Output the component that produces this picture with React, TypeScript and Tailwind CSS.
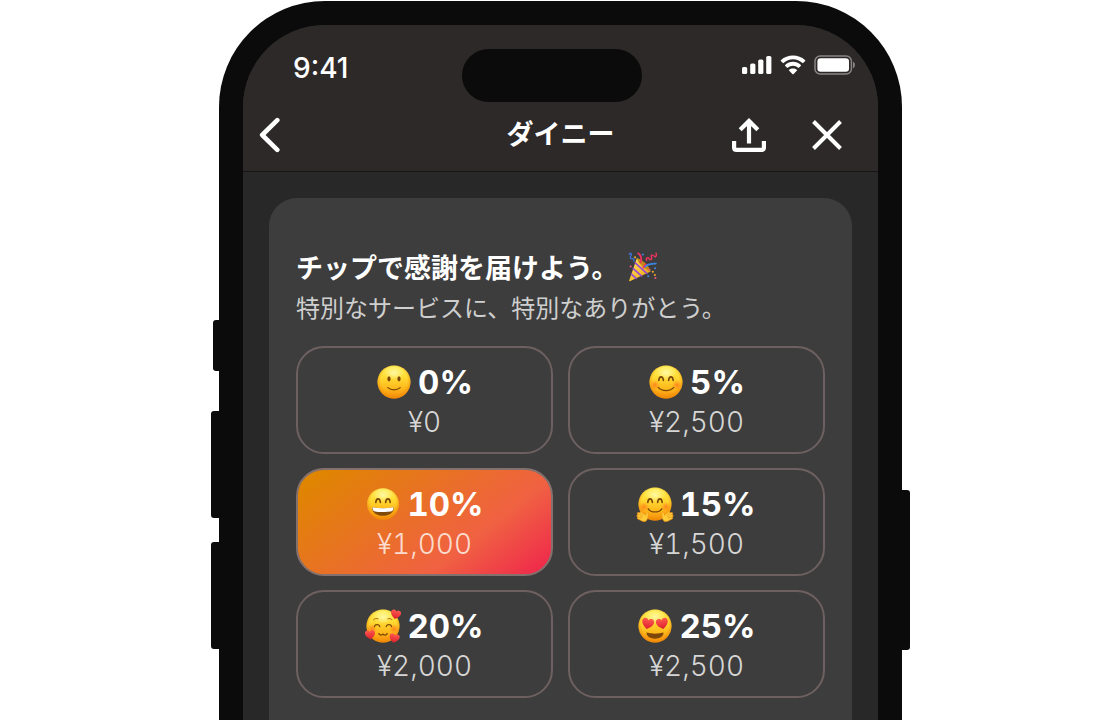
import { useState, type ReactNode } from "react";

const heart =
  "M0 5.6C-3.6 3.2-6 .9-6-1.8-6-3.9-4.5-5.2-2.9-5.2-1.6-5.2-.5-4.5 0-3.2.5-4.5 1.6-5.2 2.9-5.2 4.5-5.2 6-3.9 6-1.8 6 .9 3.6 3.2 0 5.6Z";

function Gradients() {
  return (
    <svg className="absolute h-0 w-0" aria-hidden="true">
      <defs>
        <linearGradient id="face" x1="0" y1="0" x2="0" y2="1">
          <stop offset="0" stopColor="#fff05a" />
          <stop offset=".35" stopColor="#ffdc34" />
          <stop offset=".7" stopColor="#ffb81c" />
          <stop offset="1" stopColor="#f58a0a" />
        </linearGradient>
        <radialGradient id="rim" cx=".5" cy=".45" r=".55">
          <stop offset=".72" stopColor="#f59a10" stopOpacity="0" />
          <stop offset="1" stopColor="#ec8606" stopOpacity=".8" />
        </radialGradient>
        <radialGradient id="shine" cx=".5" cy=".5" r=".5">
          <stop offset="0" stopColor="#fffbb0" stopOpacity=".9" />
          <stop offset="1" stopColor="#fffbb0" stopOpacity="0" />
        </radialGradient>
        <radialGradient id="blush" cx=".5" cy=".5" r=".5">
          <stop offset="0" stopColor="#ff6a1a" stopOpacity=".7" />
          <stop offset="1" stopColor="#ff7a1a" stopOpacity="0" />
        </radialGradient>
        <linearGradient id="heart" x1="0" y1="0" x2="0" y2="1">
          <stop offset="0" stopColor="#ff5a4e" />
          <stop offset="1" stopColor="#dc1d2e" />
        </linearGradient>
        <linearGradient id="cone" x1="0" y1="0" x2="1" y2="1">
          <stop offset="0" stopColor="#ffe46a" />
          <stop offset=".6" stopColor="#f7bd2c" />
          <stop offset="1" stopColor="#c98712" />
        </linearGradient>
      </defs>
    </svg>
  );
}

function Face({ radius = 16.5, children }: { radius?: number; children: ReactNode }) {
  return (
    <svg
      viewBox="-18 -18 36 36"
      className="h-9 w-9 shrink-0 overflow-visible"
      fill="none"
      strokeLinecap="round"
      strokeLinejoin="round"
      aria-hidden="true"
    >
      <circle r={radius} fill="url(#face)" />
      <circle r={radius} fill="url(#rim)" />
      <ellipse cy="-9" rx="10" ry="7" fill="url(#shine)" />
      {children}
    </svg>
  );
}

function Blush() {
  return (
    <>
      <circle cx="-11" cy="3" r="5" fill="url(#blush)" />
      <circle cx="11" cy="3" r="5" fill="url(#blush)" />
    </>
  );
}

function ArchedEyes() {
  return (
    <path
      d="M-7.2-1.5C-6.8-6.3-3.1-6.3-2.6-1.5M2.6-1.5C3.1-6.3 6.8-6.3 7.2-1.5"
      stroke="#7a4708"
      strokeWidth="1.6"
    />
  );
}

function SlightSmile() {
  return (
    <Face>
      <ellipse cx="-5" cy="-3.2" rx="1.6" ry="2.6" fill="#7a4708" />
      <ellipse cx="5" cy="-3.2" rx="1.6" ry="2.6" fill="#7a4708" />
      <path d="M-6.2 5.6C-3 8.6 3 8.6 6.2 5.6" stroke="#7a4708" strokeWidth="1.2" />
    </Face>
  );
}

function BlushingSmile() {
  return (
    <Face>
      <Blush />
      <ArchedEyes />
      <path d="M-7.8 5.4C-4 9.6 4 9.6 7.8 5.4" stroke="#7a4708" strokeWidth="1.3" />
    </Face>
  );
}

function Grin() {
  return (
    <Face radius={15.8}>
      <ArchedEyes />
      <path d="M-11 3.2C-4 4.6 4 4.6 11 3.2 11 8.4 6.5 11.8 0 11.8S-11 8.4-11 3.2Z" fill="#804a0b" />
      <path d="M-10.6 3.3C-4 4.7 4 4.7 10.6 3.3 10.5 6.2 9.5 7.2 8 7.4-3 8.2-3 8.2-8 7.4-9.5 7.2-10.5 6.2-10.6 3.3Z" fill="#fff" />
    </Face>
  );
}

function Hand() {
  return (
    <>
      <path
        d="M9 17C6.8 14.8 6.4 11.8 7 8.6 7.3 7.4 8.8 7.5 9 8.8L9.3 11.3 13.6 7.8C14.5 7.2 15.4 8.1 14.8 8.9L16.8 8.5C17.8 8.5 18 9.5 17.2 10L17.8 11.3C18.5 11.7 18.3 12.8 17.4 12.9L17.6 14.3C17.6 15 17 15.4 16.3 15.3L14 16.5C12.3 17.6 10.4 18 9 17Z"
        fill="#ffcc3a"
        stroke="#ee9412"
        strokeWidth=".7"
      />
      <path d="M12 11.6 14.8 8.9M12.8 12.6 17.2 10M13.2 14 17.4 12.9" stroke="#e88c10" strokeWidth=".6" />
    </>
  );
}

function Hug() {
  return (
    <Face>
      <Blush />
      <ArchedEyes />
      <path d="M-6.8 4.8C-4 9 4 9 6.8 4.8" stroke="#7a4708" strokeWidth="1.3" />
      <Hand />
      <g transform="scale(-1 1)">
        <Hand />
      </g>
    </Face>
  );
}

function Adoring() {
  return (
    <Face>
      <Blush />
      <path
        d="M-9.5-6.2C-8.6-7.4-7-7.8-5-7.2M5-7.2C7-7.8 8-7.4 9-6.2"
        stroke="#a56508"
        strokeWidth="1"
      />
      <path
        d="M-8.6.6C-8-2-4-2-3.2.6M3.2.6C4-2 8-2 8.6.6M-4.2 7.6C-3 9.6-.8 9.4 0 8 .8 9.4 3 9.6 4.2 7.6"
        stroke="#7a4708"
        strokeWidth="1.3"
      />
      <path d={heart} transform="translate(12.8 -11.6) rotate(12) scale(.84)" fill="url(#heart)" />
      <path d={heart} transform="translate(-12.9 8.7) rotate(-6) scale(.84)" fill="url(#heart)" />
      <path d={heart} transform="translate(11.4 12.2) rotate(12) scale(.84)" fill="url(#heart)" />
    </Face>
  );
}

function HeartEyes() {
  return (
    <Face>
      <path d={heart} transform="translate(-7.2 -2.4) rotate(12)" fill="url(#heart)" />
      <path d={heart} transform="translate(7.2 -2.4) rotate(-12)" fill="url(#heart)" />
      <path d="M-8.6 6.6C-3 8 3 8 8.6 6.6 8.4 10.8 4.5 12.8 0 12.8S-8.4 10.8-8.6 6.6Z" fill="#7d4709" />
    </Face>
  );
}

function PartyPopper() {
  return (
    <svg viewBox="0 0 30 30" className="mb-1 h-[30px] w-[30px]" fill="none" strokeLinecap="round" aria-hidden="true">
      <path d="M1.2 28.4 8.8 6.2C13 7.8 20 14.5 22.6 19.6L2.4 29C1.5 29.4.9 29 1.2 28.4Z" fill="url(#cone)" />
      <path d="M3.4 22.2 8 26.4M5.3 16.6 13.4 23.9M7.2 10.9 18.8 21.4" stroke="#9a4bd0" strokeWidth="1.7" />
      <path d="M8.8 6.2C13.5 6.5 21.5 14 22.6 19.6 18 18.5 10 11.5 8.8 6.2Z" fill="#c98a18" />
      <path d="M10.2 1.4C13 3 13.8 6.4 12.6 10.4M15.6 15.4 17.6 12.4" stroke="#e8345f" strokeWidth="1.9" />
      <path d="M17.4 14.6C20 11.8 23.5 11.5 28 11.6" stroke="#3d84e6" strokeWidth="1.7" />
      <path d="M1.4 2.4C2-.2 4 1.8 3 3.6S2 7 4.6 6.6 5 9.4 6 9" stroke="#3d74d8" strokeWidth="1.3" />
      <path d="M18.6 8.4C17.4 6 20.2 5 21.2 6.8S24.4 7.8 23.4 5 25.4 3 26.6 4.4 29 3 28 1.2" stroke="#e8345f" strokeWidth="1.5" />
      <path d="M14.8 2.4h.1M27 16.2h.1M20.2 24.2h.1" stroke="#3d84e6" strokeWidth="2" />
      <path d="M7 5.2h.1M24.8 19.8h.1M26.8 23h.1" stroke="#f2a62c" strokeWidth="2" />
      <path d="M2.6 14.6h.1M21.4 17.8h.1M27.4 26h.1" stroke="#f0567e" strokeWidth="2" />
    </svg>
  );
}

function StatusIcons() {
  return (
    <div className="flex h-[31px] items-center justify-end gap-2 pr-[22px]">
      <svg viewBox="0 0 30 20" className="h-5 w-[30px]" fill="#fff" aria-hidden="true">
        <rect x="0" y="12" width="5.2" height="7" rx="1.6" />
        <rect x="8.2" y="8.4" width="5.2" height="10.6" rx="1.6" />
        <rect x="16.2" y="4.6" width="5.2" height="14.4" rx="1.6" />
        <rect x="24.2" y="1" width="5.2" height="18" rx="1.6" />
      </svg>
      <svg viewBox="0 0 26 20" className="h-5 w-[26px]" fill="#fff" aria-hidden="true">
        <path d="M13 4.3c3.5 0 6.9 1.4 9.4 3.8.2.2.5.2.7 0l2.1-2.2c.2-.2.2-.5 0-.7C18.4-1 7.6-1 .8 5.2c-.2.2-.2.5 0 .7l2.1 2.2c.2.2.5.2.7 0C6.1 5.7 9.5 4.3 13 4.3Z" />
        <path d="M13 10.8c1.9 0 3.8.7 5.2 2 .2.2.5.2.7 0l2-2.1c.2-.2.2-.6 0-.8-4.5-4.1-11.3-4.1-15.8 0-.2.2-.2.6 0 .8l2 2.1c.2.2.5.2.7 0 1.4-1.3 3.3-2 5.2-2Z" />
        <path d="M17 14.9c.2.2.2.5 0 .7l-3.6 3.6c-.2.2-.6.2-.8 0L9 15.6c-.2-.2-.2-.5 0-.7 2.3-1.9 5.7-1.9 8 0Z" />
      </svg>
      <svg viewBox="0 0 42 20" className="h-5 w-[42px]" fill="none" aria-hidden="true">
        <rect x="1" y=".9" width="36.4" height="18.2" rx="5.2" stroke="#888585" strokeWidth="1.5" />
        <rect x="3.4" y="3.3" width="31.6" height="13.4" rx="3.2" fill="#fff" />
        <path d="M39 6.8c2.6.8 2.6 5.6 0 6.4Z" fill="#888585" />
      </svg>
    </div>
  );
}

const tips = [
  { rate: "0%", amount: "¥0", Emoji: SlightSmile },
  { rate: "5%", amount: "¥2,500", Emoji: BlushingSmile },
  { rate: "10%", amount: "¥1,000", Emoji: Grin },
  { rate: "15%", amount: "¥1,500", Emoji: Hug },
  { rate: "20%", amount: "¥2,000", Emoji: Adoring },
  { rate: "25%", amount: "¥2,500", Emoji: HeartEyes },
];

const selectedTile =
  "border-[#84706c] bg-[linear-gradient(142deg,#df8600_6%,#f06142_68%,#ef2b4b_95%)] bg-origin-border text-[#fbdccf]";
const plainTile = "border-[#6e6060] text-[#d6d6d6]";

export default function App() {
  const [selected, setSelected] = useState("10%");

  return (
    <div className="flex min-h-screen justify-center bg-white pt-px pl-px font-['Inter','Noto_Sans_CJK_JP',sans-serif]">
      <Gradients />
      <div className="relative flex w-full max-w-[683px] flex-col rounded-t-[106px] border-x-24 border-t-24 border-[#0b0b0b] bg-[#282828]">
        <span className="absolute top-[295px] -left-[30px] h-[51px] w-2 rounded-l-[3px] bg-[#0b0b0b]" />
        <span className="absolute top-[386px] -left-8 h-[107px] w-2.5 rounded-l-[3px] bg-[#0b0b0b]" />
        <span className="absolute top-[517px] -left-8 h-[107px] w-2.5 rounded-l-[3px] bg-[#0b0b0b]" />
        <span className="absolute top-[465px] -right-8 h-[160px] w-2.5 rounded-r-[3px] bg-[#0b0b0b]" />

        <header className="rounded-t-[82px] border-b border-[#161616] bg-[#2d2929] pb-[3px] text-white">
          <div className="grid grid-cols-[219fr_180px_236fr] items-start pt-6">
            <time className="pl-[50px] text-[28px] leading-[38px] font-medium">9:41</time>
            <div className="h-[53px] rounded-full bg-[#0b0b0b]" />
            <StatusIcons />
          </div>
          <nav className="grid h-[66px] grid-cols-[1fr_auto_1fr] items-center">
            <button type="button" aria-label="戻る" className="ml-4 w-6">
              <svg viewBox="0 0 24 36" className="h-9 w-6" fill="none" stroke="#fff" strokeWidth="4.6" strokeLinecap="round" strokeLinejoin="round" aria-hidden="true">
                <path d="M18.3 3.2 3.2 18 18.3 32.8" />
              </svg>
            </button>
            <h1 className="text-[27px] leading-10 font-bold">ダイニー</h1>
            <div className="flex items-center justify-end gap-[46px] pr-9">
              <button type="button" aria-label="共有">
                <svg viewBox="0 0 34 34" className="h-[34px] w-[34px]" fill="none" stroke="#fff" strokeWidth="4.2" aria-hidden="true">
                  <path d="M2.1 23V29.5Q2.1 31.9 4.5 31.9H29.5Q31.9 31.9 31.9 29.5V23" />
                  <path d="M17 25.5V3M8.2 11.8 17 3 25.8 11.8" />
                </svg>
              </button>
              <button type="button" aria-label="閉じる">
                <svg viewBox="0 0 30 30" className="h-[30px] w-[30px]" fill="none" stroke="#fff" strokeWidth="4" aria-hidden="true">
                  <path d="M1.5 1.5 28.5 28.5M28.5 1.5 1.5 28.5" />
                </svg>
              </button>
            </div>
          </nav>
        </header>

        <main className="flex flex-1 flex-col px-[26px] pt-[26px]">
          <section className="flex-1 rounded-t-[28px] bg-[#3d3d3d] px-[27px] pt-[52px]">
            <h2 className="flex h-[38px] items-center gap-2.5 text-[27px] font-bold text-white">
              チップで感謝を届けよう。
              <PartyPopper />
            </h2>
            <p className="text-2xl leading-[42px] font-normal text-[#cfcfcf]">特別なサービスに、特別なありがとう。</p>
            <div className="mt-4 grid grid-cols-2 gap-x-[15px] gap-y-3.5">
              {tips.map(({ rate, amount, Emoji }) => (
                <button
                  key={rate}
                  type="button"
                  aria-pressed={selected === rate}
                  onClick={() => setSelected(rate)}
                  className={`flex h-[108px] flex-col items-center justify-center rounded-[28px] border-2 pt-1.5 tabular-nums ${
                    selected === rate ? selectedTile : plainTile
                  }`}
                >
                  <span className="flex items-center gap-1.5 text-[33px] leading-[38px] font-bold text-white">
                    <Emoji />
                    {rate}
                  </span>
                  <span className="text-[28px] leading-[42px] font-light">{amount}</span>
                </button>
              ))}
            </div>
          </section>
        </main>
      </div>
    </div>
  );
}
